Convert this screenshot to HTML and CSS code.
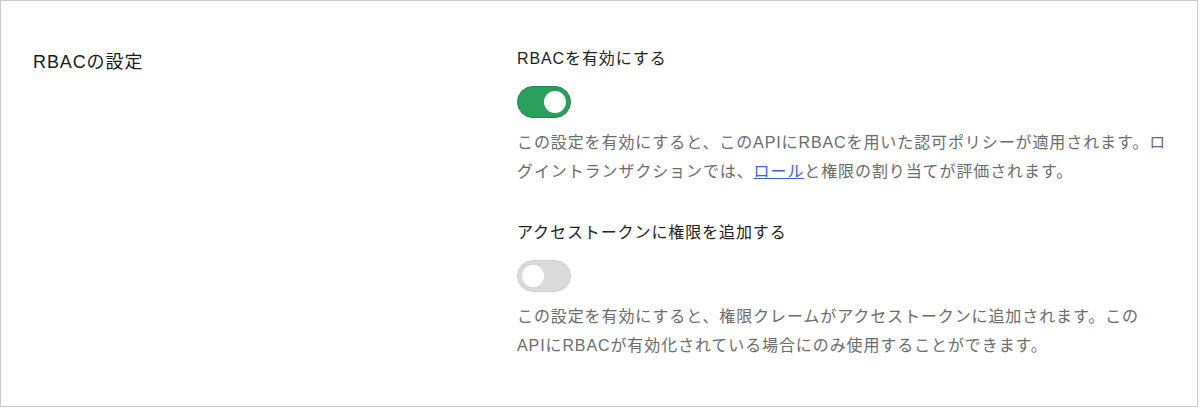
FILE: index.html
```html
<!DOCTYPE html>
<html lang="ja">
<head>
<meta charset="utf-8">
<link rel="stylesheet" href="styles.css">
</head>
<body>
<div class="panel">
  <div class="section-title">RBACの設定</div>
  <div class="settings">
    <div class="setting">
      <div class="label">RBACを有効にする</div>
      <div class="toggle on"><span class="knob"></span></div>
      <p class="desc">この設定を有効にすると、このAPIにRBACを用いた認可ポリシーが適用されます。ログイントランザクションでは、<a href="#" class="link">ロール</a>と権限の割り当てが評価されます。</p>
    </div>
    <div class="setting">
      <div class="label">アクセストークンに権限を追加する</div>
      <div class="toggle off"><span class="knob"></span></div>
      <p class="desc">この設定を有効にすると、権限クレームがアクセストークンに追加されます。このAPIにRBACが有効化されている場合にのみ使用することができます。</p>
    </div>
  </div>
</div>
</body>
</html>
```

FILE: styles.css
```css
html, body {
  margin: 0;
  padding: 0;
  background: #ffffff;
}
body {
  font-family: "Liberation Sans", "Noto Sans CJK JP", sans-serif;
  letter-spacing: 0.9px;
}
.panel {
  box-sizing: border-box;
  width: 1198px;
  height: 407px;
  border: 1px solid #c9c9c9;
  display: grid;
  grid-template-columns: 484px 650px;
  padding: 46px 0 0 32px;
}
.section-title {
  font-size: 18px;
  line-height: 30px;
  color: #1a1a1a;
}
.settings {
  display: flex;
  flex-direction: column;
  gap: 35px;
}
.setting {
  display: flex;
  flex-direction: column;
  align-items: flex-start;
}
.label {
  font-size: 16px;
  line-height: 24px;
  color: #222222;
}
.toggle {
  box-sizing: border-box;
  width: 54px;
  height: 32px;
  border-radius: 16px;
  margin-top: 15px;
  display: flex;
  align-items: center;
  padding: 0 4px;
}
.toggle.on {
  background: #2a9e5c;
  border: 1px solid #1f8a4d;
  justify-content: flex-end;
}
.toggle.off {
  background: #dadada;
  border: 1px solid #d0d0d0;
  justify-content: flex-start;
}
.knob {
  width: 22px;
  height: 22px;
  border-radius: 50%;
  background: #ffffff;
}
.desc {
  margin: 10px 0 0;
  font-size: 16px;
  line-height: 29px;
  color: #6b6b6b;
}
.link {
  color: #3a62d8;
  text-decoration: underline;
}
```
